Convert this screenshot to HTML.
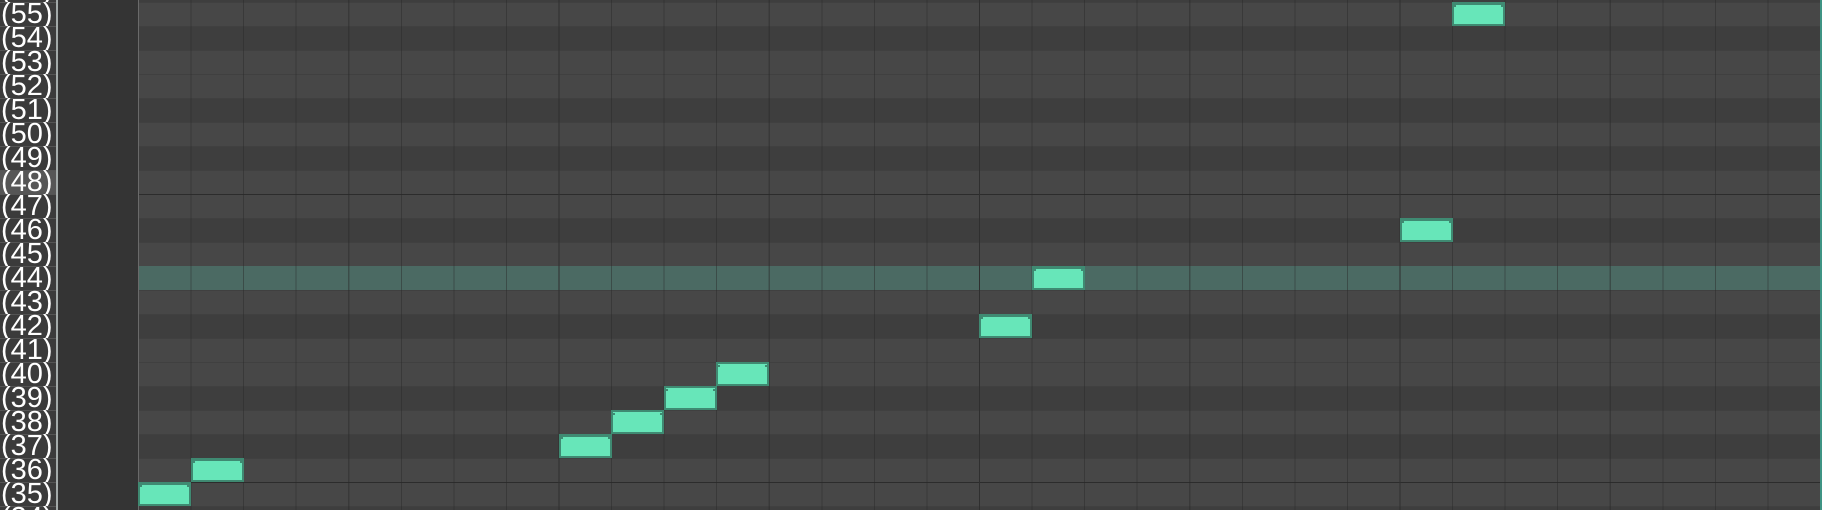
<!DOCTYPE html>
<html><head><meta charset="utf-8"><style>
html,body{margin:0;padding:0;background:#333;overflow:hidden;width:1822px;height:510px;}
#root{width:1822px;height:510px;position:relative;overflow:hidden;font-family:"Liberation Sans",sans-serif;background:#333;}
.lab{position:absolute;left:0;width:56px;height:24px;background:#3b3b3b;border-top:1px solid #545454;box-sizing:border-box;color:#fff;font-size:29px;line-height:23px;padding-left:1px;white-space:nowrap;overflow:visible;}
.lab.c{background:#565656;}
.sep{position:absolute;left:56px;top:0;width:2px;height:510px;background:#a3aaa9;}
.dk{position:absolute;left:58px;top:0;width:80px;height:510px;background:#343434;}
.r{position:absolute;left:138px;width:1682px;height:24px;border-top:1px solid #404040;box-sizing:border-box;}
.w{background:#474747;}
.b{background:#3e3e3e;}
.h{background:#4b6a63;border-top-color:#4b6a63;}
.oct{border-top:1px solid #2c2c2c;}
.vl{position:absolute;left:138px;top:0;width:1682px;height:510px;
background-image:repeating-linear-gradient(to right,#2f2f2f 0 1px,transparent 1px 420.5px),repeating-linear-gradient(to right,rgba(40,40,40,0.45) 0 1px,transparent 1px 52.5625px);}
.vl0{position:absolute;left:138px;top:0;width:1px;height:510px;background:#6a6a6a;}
.edge{position:absolute;left:1820px;top:0;width:2px;height:510px;background:#3f9484;}
.n{position:absolute;width:53px;height:24px;background:#3f8a72;}
.n i{position:absolute;left:2px;right:2px;top:5px;bottom:2px;background:#67e6b9;}
.n i:before{content:"";position:absolute;left:2px;right:2px;top:-2px;height:2px;background:#67e6b9;}
.n.t b{position:absolute;left:2px;right:2px;top:2px;height:1px;background:#67e6b9;}
</style></head><body><div id="root">
<div class="dk"></div>
<div class="r b" style="top:-22px"></div>
<div class="r w" style="top:2px"></div>
<div class="r b" style="top:26px"></div>
<div class="r w" style="top:50px"></div>
<div class="r w" style="top:74px"></div>
<div class="r b" style="top:98px"></div>
<div class="r w" style="top:122px"></div>
<div class="r b" style="top:146px"></div>
<div class="r w" style="top:170px"></div>
<div class="r w oct" style="top:194px"></div>
<div class="r b" style="top:218px"></div>
<div class="r w" style="top:242px"></div>
<div class="r h" style="top:266px"></div>
<div class="r w" style="top:290px"></div>
<div class="r b" style="top:314px"></div>
<div class="r w" style="top:338px"></div>
<div class="r w" style="top:362px"></div>
<div class="r b" style="top:386px"></div>
<div class="r w" style="top:410px"></div>
<div class="r b" style="top:434px"></div>
<div class="r w" style="top:458px"></div>
<div class="r w oct" style="top:482px"></div>
<div class="r b" style="top:506px"></div>
<div class="vl"></div>
<div class="vl0"></div>
<div class="edge"></div>
<div class="lab" style="top:-22px">(56)</div>
<div class="lab" style="top:2px">(55)</div>
<div class="lab" style="top:26px">(54)</div>
<div class="lab" style="top:50px">(53)</div>
<div class="lab" style="top:74px">(52)</div>
<div class="lab" style="top:98px">(51)</div>
<div class="lab" style="top:122px">(50)</div>
<div class="lab" style="top:146px">(49)</div>
<div class="lab c" style="top:170px">(48)</div>
<div class="lab" style="top:194px">(47)</div>
<div class="lab" style="top:218px">(46)</div>
<div class="lab" style="top:242px">(45)</div>
<div class="lab" style="top:266px">(44)</div>
<div class="lab" style="top:290px">(43)</div>
<div class="lab" style="top:314px">(42)</div>
<div class="lab" style="top:338px">(41)</div>
<div class="lab" style="top:362px">(40)</div>
<div class="lab" style="top:386px">(39)</div>
<div class="lab" style="top:410px">(38)</div>
<div class="lab" style="top:434px">(37)</div>
<div class="lab" style="top:458px">(36)</div>
<div class="lab" style="top:482px">(35)</div>
<div class="lab" style="top:506px">(34)</div>
<div class="sep"></div>
<div class="n" style="left:138px;top:482px"><i></i></div>
<div class="n" style="left:191px;top:458px"><i></i></div>
<div class="n" style="left:559px;top:434px"><i></i></div>
<div class="n t" style="left:611px;top:410px"><b></b><i></i></div>
<div class="n t" style="left:664px;top:386px"><b></b><i></i></div>
<div class="n t" style="left:716px;top:362px"><b></b><i></i></div>
<div class="n" style="left:979px;top:314px"><i></i></div>
<div class="n" style="left:1032px;top:266px"><i></i></div>
<div class="n" style="left:1400px;top:218px"><i></i></div>
<div class="n" style="left:1452px;top:2px"><i></i></div>
</div></body></html>
